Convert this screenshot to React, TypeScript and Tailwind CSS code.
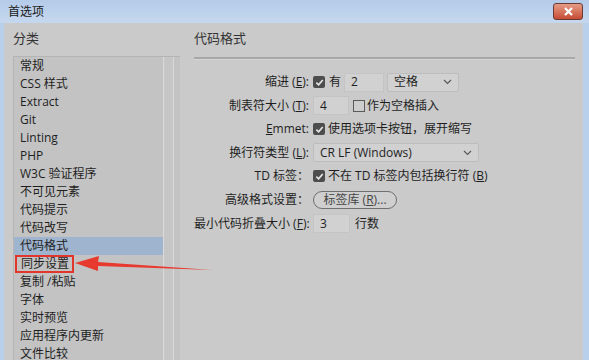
import React from 'react';

const font = { fontFamily: '"Open Sans", "Noto Sans CJK SC", sans-serif' };

const categories = [
  '常规',
  'CSS 样式',
  'Extract',
  'Git',
  'Linting',
  'PHP',
  'W3C 验证程序',
  '不可见元素',
  '代码提示',
  '代码改写',
  '代码格式',
  '同步设置',
  '复制 /粘贴',
  '字体',
  '实时预览',
  '应用程序内更新',
  '文件比较',
];

const Check: React.FC<{ on?: boolean }> = ({ on }) =>
  on ? (
    <span className="w-[12px] h-[12px] rounded-[2px] bg-[#4d4d4d] flex items-center justify-center shrink-0">
      <svg width="9" height="9" viewBox="0 0 10 10">
        <path d="M1.5 5.2 L4 7.6 L8.6 2.2" fill="none" stroke="#e8e8e8" strokeWidth="1.8" />
      </svg>
    </span>
  ) : (
    <span className="block w-[12px] h-[12px] border border-[#5a5a5a] bg-[#cdcdcd] shrink-0" />
  );

const Chevron = () => (
  <svg width="9" height="6" viewBox="0 0 9 6">
    <path d="M1 1 L4.5 4.5 L8 1" fill="none" stroke="#555" strokeWidth="1.1" />
  </svg>
);

const Label: React.FC<{ children: React.ReactNode }> = ({ children }) => (
  <div className="w-[119px] text-right pr-[4px] shrink-0 whitespace-nowrap">{children}</div>
);

const Field: React.FC<{ value: string; w: string }> = ({ value, w }) => (
  <div className={`${w} h-[19px] bg-[#d1d1d1] border border-[#c4c4c4] pl-[6px] flex items-center`}>{value}</div>
);

const App: React.FC = () => {
  return (
    <div className="w-[589px] h-[360px] overflow-hidden relative bg-[#b9d0ec] text-[12px] text-[#1e1e1e]" style={font}>
      {/* title bar */}
      <div className="h-[23px] flex items-center justify-between pl-[8px] pr-[6px] bg-gradient-to-b from-[#b4cbe9] to-[#c6d8ee]">
        <span className="text-[#1a1a1a]">首选项</span>
        <div className="w-[30px] h-[17px] rounded-[3px] border border-[#6b3a32] bg-gradient-to-b from-[#e59b86] to-[#c64b33] flex items-center justify-center">
          <svg width="11" height="9" viewBox="0 0 11 9">
            <path d="M2 1 L9 8 M9 1 L2 8" stroke="#ffffff" strokeWidth="2.2" />
          </svg>
        </div>
      </div>

      {/* body */}
      <div className="ml-[4px] mr-[6px] h-[337px] bg-[#cacaca] flex">
        {/* categories */}
        <div className="w-[176px] pl-[9px] flex flex-col">
          <div className="pt-[6px] pb-[7px] text-[13px] text-[#333]">分类</div>
          <div className="flex-1 flex bg-[#c3c3c3] border-t border-l border-[#b4b4b4]">
            <div className="w-[149px] flex flex-col">
              {categories.map((c) => (
                <div
                  key={c}
                  className={`h-[18px] pl-[6px] flex items-center whitespace-nowrap ${c === '代码格式' ? 'bg-[#9fb4cf]' : ''}`}
                >
                  {c === '同步设置' ? (
                    <span className="-ml-[5px] pl-[4px] pr-[3px] border-2 border-[#e2352b] leading-[14px]">{c}</span>
                  ) : (
                    c
                  )}
                </div>
              ))}
            </div>
            <div className="w-[11px] border-l border-r border-[#dadada] bg-[#c6c6c6]" />
          </div>
        </div>

        {/* settings */}
        <div className="flex-1 pl-[14px] pr-[8px] flex flex-col">
          <div className="pt-[6px] text-[13px] text-[#333]">代码格式</div>
          <div className="mt-[8px] h-[3px] bg-[#a8a8a8] border-b border-[#d6d6d6]" />
          <div className="flex flex-col gap-[4.6px] mt-[13px]">
            <div className="h-[19px] flex items-center">
              <Label>
                缩进 (<span className="underline">E</span>):
              </Label>
              <Check on />
              <span className="ml-[4px] mr-[3px]">有</span>
              <Field value="2" w="w-[40px]" />
              <div className="ml-[3px] w-[72px] h-[19px] bg-[#d1d1d1] border border-[#bdbdbd] rounded-[2px] px-[6px] flex items-center justify-between">
                <span>空格</span>
                <Chevron />
              </div>
            </div>
            <div className="h-[19px] flex items-center">
              <Label>
                制表符大小 (<span className="underline">T</span>):
              </Label>
              <Field value="4" w="w-[36px]" />
              <span className="ml-[4px]">
                <Check />
              </span>
              <span className="ml-[2px]">作为空格插入</span>
            </div>
            <div className="h-[19px] flex items-center">
              <Label>
                <span className="underline">E</span>mmet:
              </Label>
              <Check on />
              <span className="ml-[3px]">使用选项卡按钮，展开缩写</span>
            </div>
            <div className="h-[19px] flex items-center">
              <Label>
                换行符类型 (<span className="underline">L</span>):
              </Label>
              <div className="w-[166px] h-[19px] bg-[#d1d1d1] border border-[#bdbdbd] rounded-[2px] px-[6px] flex items-center justify-between">
                <span>CR LF (Windows)</span>
                <Chevron />
              </div>
            </div>
            <div className="h-[19px] flex items-center">
              <Label>TD 标签：</Label>
              <Check on />
              <span className="ml-[3px] whitespace-nowrap">
                不在 TD 标签内包括换行符 (<span className="underline">B</span>)
              </span>
            </div>
            <div className="h-[19px] flex items-center">
              <Label>高级格式设置：</Label>
              <div className="w-[84px] h-[18px] rounded-full border border-[#707070] bg-[#cfcfcf] flex items-center justify-center text-[#444]">
                标签库 (<span className="underline">R</span>)...
              </div>
            </div>
            <div className="h-[19px] flex items-center">
              <Label>
                最小代码折叠大小 (<span className="underline">F</span>):
              </Label>
              <Field value="3" w="w-[37px]" />
              <span className="ml-[5px]">行数</span>
            </div>
          </div>
        </div>
      </div>

      {/* red annotation arrow */}
      <svg className="absolute left-0 top-0 pointer-events-none" width="589" height="360">
        <path d="M212 270 L98 262 L99 256 L75 263 L98 271 L98 266 Z" fill="#e8392f" />
      </svg>
    </div>
  );
};

export default App;
